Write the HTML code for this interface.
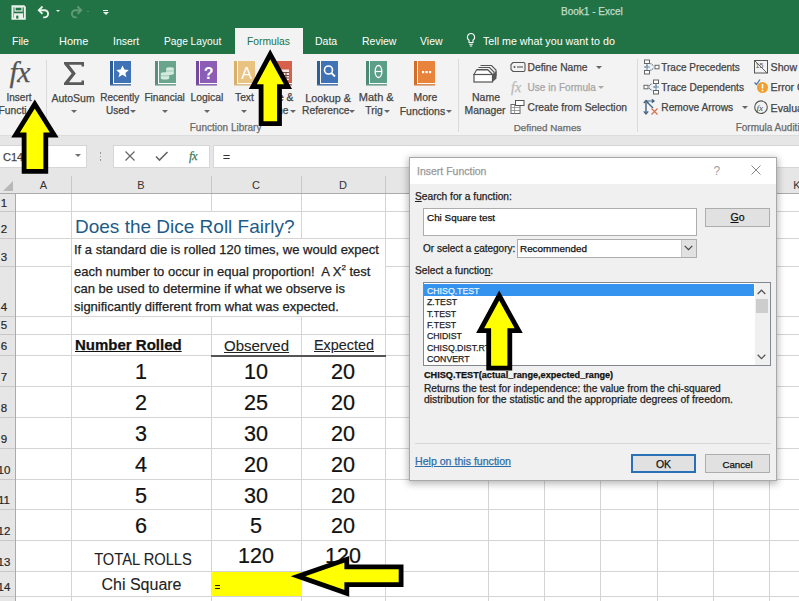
<!DOCTYPE html>
<html><head><meta charset="utf-8">
<style>
*{margin:0;padding:0;box-sizing:border-box}
html,body{width:799px;height:601px;overflow:hidden;background:#fff}
body{position:relative;font-family:"Liberation Sans",sans-serif;color:#262626}
.a{position:absolute;white-space:nowrap}
.t{position:absolute;white-space:nowrap;line-height:1;-webkit-text-stroke:0.25px currentColor}
.hl{position:absolute;height:1px;background:#d4d4d4}
.vl{position:absolute;width:1px;background:#d4d4d4}
.tab{position:absolute;top:36px;font-size:11px;color:#fff;line-height:11px}
.rl{position:absolute;font-size:11px;color:#444;line-height:11px;text-align:center}
.dd{position:absolute;width:0;height:0;border-left:3px solid transparent;border-right:3px solid transparent;border-top:3px solid #666}
.rn{position:absolute;left:-8px;width:24px;font-size:11.5px;color:#262626;-webkit-text-stroke:0.2px #262626;text-align:center;line-height:1;white-space:nowrap}
.ch{position:absolute;top:180px;font-size:11px;color:#333;text-align:center;line-height:11px}
.num{position:absolute;font-size:21.6px;color:#111;text-align:center;line-height:21px;-webkit-text-stroke:0.2px #111}
</style></head><body>

<!-- green title/tab bar -->
<div class="a" style="left:0;top:0;width:799px;height:54px;background:#217346"></div>
<div class="a" style="left:0;top:54px;width:799px;height:82px;background:#f3f3f3"></div>
<div class="a" style="left:0;top:135px;width:799px;height:1px;background:#dcdcdc"></div>
<div class="a" style="left:0;top:136px;width:799px;height:58px;background:#e6e6e6"></div>


<!-- QAT icons -->
<svg class="a" style="left:11px;top:5px" width="15" height="15" viewBox="0 0 15 15">
 <path d="M1.5 1.2h11.3l1 1v11.6h-12.3z" fill="none" stroke="#eaf3ec" stroke-width="2"/>
 <rect x="4" y="2" width="7" height="4" fill="none" stroke="#eaf3ec" stroke-width="1.2"/>
 <rect x="3" y="8.3" width="9" height="5" fill="#eaf3ec"/>
 <rect x="5.2" y="10.6" width="2.2" height="3" fill="#217346"/>
</svg>
<svg class="a" style="left:37px;top:5px" width="15" height="15" viewBox="0 0 15 15">
 <path d="M5.5 1.5L1.8 5.2L5.5 8.9" fill="none" stroke="#eaf3ec" stroke-width="1.9"/>
 <path d="M2.3 5.2h5.2a3.6 3.6 0 0 1 0 7.2h-1.3" fill="none" stroke="#eaf3ec" stroke-width="1.9"/>
</svg>
<div class="a" style="left:55.5px;top:10.3px;width:0;height:0;border-left:2.3px solid transparent;border-right:2.3px solid transparent;border-top:2.7px solid #eaf3ec"></div>
<svg class="a" style="left:68px;top:5px" width="15" height="15" viewBox="0 0 15 15">
 <path d="M9.5 1.5L13.2 5.2L9.5 8.9" fill="none" stroke="#5e9b76" stroke-width="1.9"/>
 <path d="M12.7 5.2h-5.2a3.6 3.6 0 0 0 0 7.2h1.3" fill="none" stroke="#5e9b76" stroke-width="1.9"/>
</svg>
<div class="a" style="left:86.5px;top:10.8px;width:2px;height:1.5px;background:#4f8d68"></div>
<div class="a" style="left:103px;top:9.6px;width:5px;height:1.2px;background:#eaf3ec"></div>
<div class="a" style="left:102.5px;top:12px;width:0;height:0;border-left:3px solid transparent;border-right:3px solid transparent;border-top:3.3px solid #eaf3ec"></div>

<div class="t" style="left:561px;top:7px;font-size:10px;color:#c2ddc9">Book1 - Excel</div>

<!-- tabs -->
<div class="tab" style="left:12px;font-size:10.5px">File</div>
<div class="tab" style="left:59px">Home</div>
<div class="tab" style="left:113px;font-size:10.5px">Insert</div>
<div class="tab" style="left:164px;font-size:10.2px">Page Layout</div>
<div class="a" style="left:235px;top:28px;width:68px;height:27px;background:#f3f3f3"></div>
<div class="tab" style="left:247px;font-size:10.3px;color:#217346">Formulas</div>
<div class="tab" style="left:315px;font-size:10.5px">Data</div>
<div class="tab" style="left:362px;font-size:10.5px">Review</div>
<div class="tab" style="left:420px;font-size:10.5px">View</div>
<svg class="a" style="left:466px;top:32px" width="10" height="16" viewBox="0 0 10 16">
 <path d="M5 1.5a3.6 3.6 0 0 0-2 6.6v2.4h4v-2.4a3.6 3.6 0 0 0-2-6.6z" fill="none" stroke="#fff" stroke-width="1.1"/>
 <path d="M3.2 12.3h3.6M3.8 14h2.4" stroke="#fff" stroke-width="1.1"/>
</svg>
<div class="tab" style="left:483px;font-size:10.7px">Tell me what you want to do</div>
<!-- RIBBON -->
<div class="t" style="left:9.5px;top:58px;font-family:'Liberation Serif',serif;font-style:italic;font-size:29.5px;color:#555;letter-spacing:-0.5px">fx</div>
<div class="t" style="left:6.5px;top:93.33px;font-size:10px;color:#444;">Insert</div>
<div class="t" style="left:-1.5px;top:105.88px;font-size:10.3px;color:#444;">Functi</div>
<div class="a" style="left:46px;top:60px;width:1px;height:72px;background:#dadada"></div>
<svg class="a" style="left:63px;top:61px" width="23" height="25" viewBox="0 0 23 25">
 <path d="M1 1H21V5.5H18.5V3.8H6L12.8 12.5L6 21.2H18.5V19.5H21V24H1V22L8.7 12.5L1 3z" fill="#5a5a5a"/>
</svg>
<div class="t" style="left:51.5px;top:92.91px;font-size:10.5px;color:#444;">AutoSum</div>
<div class="dd" style="left:71.0px;top:109.5px;border-top-color:#666"></div>
<svg class="a" style="left:110px;top:61px" width="22" height="25" viewBox="0 0 22 25">
 <rect x="0" y="0" width="21" height="24.5" fill="#fbfbfb"/>
 <rect x="0" y="0" width="3" height="23.5" fill="#2d5e98"/>
 <rect x="4" y="0" width="17" height="22" fill="#3f73b5"/>
 <rect x="0" y="23.2" width="21" height="1.3" fill="#2d5e98"/>
 <path d="M12.5 4.5l1.9 4.1 4.4 0.4-3.4 2.9 1.1 4.3-4-2.4-4 2.4 1.1-4.3-3.4-2.9 4.4-0.4z" fill="#fff"/>
</svg>
<div class="t" style="left:100.3px;top:93.33px;font-size:10px;color:#444;">Recently</div>
<div class="t" style="left:106px;top:106.13px;font-size:10px;color:#444;">Used</div>
<div class="dd" style="left:129.5px;top:109.5px;border-top-color:#666"></div>
<svg class="a" style="left:155px;top:61px" width="22" height="25" viewBox="0 0 22 25">
 <rect x="0" y="0" width="21" height="24.5" fill="#fbfbfb"/>
 <rect x="0" y="0" width="3" height="23.5" fill="#56907a"/>
 <rect x="4" y="0" width="17" height="22" fill="#6aa48c"/>
 <rect x="0" y="23.2" width="21" height="1.3" fill="#56907a"/>
 <g fill="#d3eadf"><ellipse cx="15" cy="7.6" rx="3.8" ry="1.4"/><rect x="11.2" y="7.6" width="7.6" height="5"/><ellipse cx="15" cy="12.6" rx="3.8" ry="1.4"/><ellipse cx="10" cy="12.6" rx="4.2" ry="1.4"/><rect x="5.8" y="12.6" width="8.4" height="4.6"/><ellipse cx="10" cy="17.2" rx="4.2" ry="1.4"/></g><path d="M11.2 10h7.6M5.8 14.8h8.4" stroke="#8dbba6" stroke-width="0.7"/>
</svg>
<div class="t" style="left:144.4px;top:93.25px;font-size:10.1px;color:#444;">Financial</div>
<div class="dd" style="left:161.7px;top:109.5px;border-top-color:#666"></div>
<svg class="a" style="left:196px;top:61px" width="22" height="25" viewBox="0 0 22 25">
 <rect x="0" y="0" width="21" height="24.5" fill="#fbfbfb"/>
 <rect x="0" y="0" width="3" height="23.5" fill="#74489c"/>
 <rect x="4" y="0" width="17" height="22" fill="#8c5db5"/>
 <rect x="0" y="23.2" width="21" height="1.3" fill="#74489c"/>
 <text x="12.7" y="17.5" text-anchor="middle" font-family="Liberation Sans" font-weight="bold" font-size="16" fill="#fff">?</text>
</svg>
<div class="t" style="left:190.4px;top:93.00px;font-size:10.4px;color:#444;">Logical</div>
<div class="dd" style="left:203.8px;top:109.5px;border-top-color:#666"></div>
<svg class="a" style="left:234px;top:61px" width="22" height="25" viewBox="0 0 22 25">
 <rect x="0" y="0" width="21" height="24.5" fill="#fbfbfb"/>
 <rect x="0" y="0" width="3" height="23.5" fill="#d9b06a"/>
 <rect x="4" y="0" width="17" height="22" fill="#e8c382"/>
 <rect x="0" y="23.2" width="21" height="1.3" fill="#d9b06a"/>
 <text x="12.5" y="17.5" text-anchor="middle" font-family="Liberation Sans" font-size="16" fill="#fff">A</text>
</svg>
<div class="t" style="left:235px;top:93.08px;font-size:10.3px;color:#444;">Text</div>
<div class="dd" style="left:241.0px;top:109.5px;border-top-color:#666"></div>
<svg class="a" style="left:271px;top:61px" width="22" height="25" viewBox="0 0 22 25">
 <rect x="0" y="0" width="21" height="24.5" fill="#fbfbfb"/>
 <rect x="0" y="0" width="3" height="23.5" fill="#b94e3b"/>
 <rect x="4" y="0" width="17" height="22" fill="#d6604a"/>
 <rect x="0" y="23.2" width="21" height="1.3" fill="#b94e3b"/>
 <rect x="9" y="8.5" width="9" height="10.5" fill="#f6e3de"/><path d="M9 11.5h9M9 14.5h9M9 17h9M12 11.5v7.5M15 11.5v7.5" stroke="#6b3b30" stroke-width="0.9"/>
</svg>
<div class="t" style="left:262px;top:93.08px;font-size:10.3px;color:#444;">Date &amp;</div>
<div class="t" style="left:266px;top:105.88px;font-size:10.3px;color:#444;">Time</div>
<div class="dd" style="left:290.0px;top:109.5px;border-top-color:#666"></div>
<svg class="a" style="left:317px;top:61px" width="22" height="25" viewBox="0 0 22 25">
 <rect x="0" y="0" width="21" height="24.5" fill="#fbfbfb"/>
 <rect x="0" y="0" width="3" height="23.5" fill="#2d5e98"/>
 <rect x="4" y="0" width="17" height="22" fill="#3f73b5"/>
 <rect x="0" y="23.2" width="21" height="1.3" fill="#2d5e98"/>
 <circle cx="11.5" cy="9" r="4" fill="none" stroke="#fff" stroke-width="1.6"/><path d="M14.3 11.8L18 15.5" stroke="#fff" stroke-width="1.8"/>
</svg>
<div class="t" style="left:305.3px;top:92.66px;font-size:10.8px;color:#444;">Lookup &amp;</div>
<div class="t" style="left:302px;top:105.88px;font-size:10.3px;color:#444;">Reference</div>
<div class="dd" style="left:349.0px;top:109.5px;border-top-color:#666"></div>
<svg class="a" style="left:366px;top:61px" width="22" height="25" viewBox="0 0 22 25">
 <rect x="0" y="0" width="21" height="24.5" fill="#fbfbfb"/>
 <rect x="0" y="0" width="3" height="23.5" fill="#4c8a76"/>
 <rect x="4" y="0" width="17" height="22" fill="#5c9f89"/>
 <rect x="0" y="23.2" width="21" height="1.3" fill="#4c8a76"/>
 <ellipse cx="12.5" cy="10.5" rx="3.3" ry="6" fill="none" stroke="#fff" stroke-width="1.4"/><path d="M9.3 10.5h6.4" stroke="#fff" stroke-width="1.2"/>
</svg>
<div class="t" style="left:358.8px;top:92.49px;font-size:11px;color:#444;">Math &amp;</div>
<div class="t" style="left:365.3px;top:105.88px;font-size:10.3px;color:#444;">Trig</div>
<div class="dd" style="left:383.5px;top:109.5px;border-top-color:#666"></div>
<svg class="a" style="left:414px;top:61px" width="22" height="25" viewBox="0 0 22 25">
 <rect x="0" y="0" width="21" height="24.5" fill="#fbfbfb"/>
 <rect x="0" y="0" width="3" height="23.5" fill="#cf6f2a"/>
 <rect x="4" y="0" width="17" height="22" fill="#e8833b"/>
 <rect x="0" y="23.2" width="21" height="1.3" fill="#cf6f2a"/>
 <rect x="8" y="10" width="2.2" height="2.2" fill="#fff"/><rect x="11.5" y="10" width="2.2" height="2.2" fill="#fff"/><rect x="15" y="10" width="2.2" height="2.2" fill="#fff"/>
</svg>
<div class="t" style="left:413.6px;top:93.00px;font-size:10.4px;color:#444;">More</div>
<div class="t" style="left:399.7px;top:105.71px;font-size:10.5px;color:#444;">Functions</div>
<div class="dd" style="left:445.5px;top:109.5px;border-top-color:#666"></div>
<div class="t" style="left:189.75px;top:123.44px;font-size:10px;color:#6a6a6a;">Function Library</div>
<div class="a" style="left:458px;top:59px;width:1px;height:73px;background:#dadada"></div>
<svg class="a" style="left:473px;top:64px" width="26" height="20" viewBox="0 0 26 20">
 <path d="M7.5 1.5h11l4.5 4.5v6" fill="none" stroke="#555" stroke-width="1.1"/>
 <path d="M5.5 3.5h11l4.5 4.5v6" fill="none" stroke="#555" stroke-width="1.1"/>
 <path d="M3.5 5.5h11l4.5 4.5" fill="none" stroke="#555" stroke-width="1.1"/>
 <path d="M1 10.5l2.5-4.5h11.5l4.5 4.5z" fill="#fff" stroke="#555" stroke-width="1.1"/>
 <rect x="1" y="10.5" width="18.5" height="7.5" fill="#fff" stroke="#555" stroke-width="1.2"/>
 <path d="M19.5 10.5l4-3.5v7.5l-4 3.5z" fill="#555"/>
</svg>
<div class="t" style="left:472px;top:92.11px;font-size:10.5px;color:#444;">Name</div>
<div class="t" style="left:464.5px;top:105.70px;font-size:10.4px;color:#444;">Manager</div>
<svg class="a" style="left:510px;top:61px" width="16" height="13" viewBox="0 0 16 13">
 <path d="M3 1.5h10.5a1.5 1.5 0 0 1 1.5 1.5v6a1.5 1.5 0 0 1-1.5 1.5h-10.5l-2-2v-5z" fill="none" stroke="#555" stroke-width="1.1"/>
 <circle cx="4.5" cy="6" r="1" fill="#555"/><path d="M7 6h6" stroke="#555" stroke-width="1.1"/>
</svg>
<div class="t" style="left:527.5px;top:62.53px;font-size:10.3px;color:#444;">Define Name</div>
<div class="dd" style="left:595.8px;top:66.0px;border-top-color:#666"></div>
<div class="t" style="left:511px;top:81px;font-family:'Liberation Serif',serif;font-style:italic;font-size:14px;color:#b8b8b8">fx</div>
<div class="t" style="left:527.5px;top:82.70px;font-size:10.1px;color:#a6a6a6;">Use in Formula</div>
<div class="dd" style="left:598.0px;top:86.0px;border-top-color:#aaa"></div>
<svg class="a" style="left:510px;top:100px" width="15" height="14" viewBox="0 0 15 14">
 <rect x="1" y="4.5" width="9" height="9" fill="#fff" stroke="#666" stroke-width="1"/>
 <path d="M1 7.5h9M1 10.5h9M4.5 4.5v9" stroke="#888" stroke-width="0.8"/>
 <rect x="5.5" y="0.5" width="8.5" height="5" fill="#fff" stroke="#555" stroke-width="1"/>
</svg>
<div class="t" style="left:527.5px;top:103.03px;font-size:10.3px;color:#444;">Create from Selection</div>
<div class="t" style="left:513.75px;top:123.45px;font-size:9.8px;color:#6a6a6a;">Defined Names</div>
<div class="a" style="left:637px;top:59px;width:1px;height:73px;background:#dadada"></div>
<svg class="a" style="left:643px;top:59px" width="17" height="16" viewBox="0 0 17 16">
 <rect x="1.5" y="1" width="5" height="3.5" fill="#fff" stroke="#666" stroke-width="1"/>
 <rect x="1.5" y="11.5" width="5" height="3.5" fill="#fff" stroke="#666" stroke-width="1"/>
 <rect x="12" y="6.3" width="4" height="3.5" fill="#fff" stroke="#666" stroke-width="1"/>
 <path d="M4 5.5v5M1.5 8h5" stroke="#3e6a8f" stroke-width="1.6" stroke-dasharray="1.3 0.7"/>
 <path d="M7.5 4.5l3 2.5M7.5 11.5l3-2.5" stroke="#3e6a8f" stroke-width="1.2" stroke-dasharray="1 0.8"/>
</svg>
<div class="t" style="left:661.3px;top:62.63px;font-size:10px;color:#444;">Trace Precedents</div>
<svg class="a" style="left:643px;top:79px" width="17" height="16" viewBox="0 0 17 16">
 <rect x="1" y="6.3" width="4" height="3.5" fill="#fff" stroke="#666" stroke-width="1"/>
 <rect x="10.5" y="1" width="5" height="3.5" fill="#fff" stroke="#666" stroke-width="1"/>
 <rect x="10.5" y="11.5" width="5" height="3.5" fill="#fff" stroke="#666" stroke-width="1"/>
 <path d="M13 5.5v5M10.5 8h5" stroke="#3e6a8f" stroke-width="1.6" stroke-dasharray="1.3 0.7"/>
 <path d="M6 7l3-2.5M6 9l3 2.5" stroke="#3e6a8f" stroke-width="1.2" stroke-dasharray="1 0.8"/>
</svg>
<div class="t" style="left:661.3px;top:82.65px;font-size:10.1px;color:#444;">Trace Dependents</div>
<svg class="a" style="left:643px;top:99px" width="17" height="17" viewBox="0 0 17 17">
 <path d="M3 2v12.5" stroke="#41627e" stroke-width="1.4"/>
 <path d="M0.8 4l2.2-2.6 2.2 2.6M0.8 12.3l2.2 2.6 2.2-2.6" stroke="#41627e" stroke-width="1.3" fill="none"/>
 <path d="M3.5 2h7.5M8.8 0.3l2.3 1.7-2.3 1.7" stroke="#41627e" stroke-width="1.2" fill="none"/>
 <path d="M4 3l6 6" stroke="#41627e" stroke-width="1.2"/>
 <path d="M8.5 9.5l6 6M14.5 9.5l-6 6" stroke="#d9734e" stroke-width="1.3"/>
</svg>
<div class="t" style="left:661.3px;top:102.67px;font-size:10.2px;color:#444;">Remove Arrows</div>
<div class="dd" style="left:741.8px;top:106.0px;border-top-color:#666"></div>
<svg class="a" style="left:754px;top:60px" width="14" height="14" viewBox="0 0 14 14">
 <rect x="0.5" y="0.5" width="13" height="12.5" fill="none" stroke="#555" stroke-width="1"/>
 <path d="M1 1l12 12" stroke="#555" stroke-width="0.9"/>
 <text x="1.5" y="8" font-size="7" font-family="Liberation Sans" fill="#555">15</text>
</svg>
<div class="t" style="left:770.6px;top:62.13px;font-size:10.6px;color:#444;">Show</div>
<svg class="a" style="left:754px;top:79px" width="15" height="15" viewBox="0 0 15 15">
 <path d="M0.5 3.5l2 2 3.5-5" stroke="#3f73b5" stroke-width="1.3" fill="none"/>
 <circle cx="8.5" cy="8.5" r="5.5" fill="#f0a030"/>
 <path d="M8.5 5v4.5M8.5 10.7v1.5" stroke="#fff" stroke-width="1.5"/>
</svg>
<div class="t" style="left:770.6px;top:82.43px;font-size:10.6px;color:#444;">Error Checking</div>
<svg class="a" style="left:754px;top:100px" width="15" height="15" viewBox="0 0 15 15">
 <circle cx="7" cy="7.2" r="6.3" fill="none" stroke="#555" stroke-width="1.1"/>
 <text x="2.6" y="10.5" font-size="9" font-style="italic" font-family="Liberation Serif" fill="#444">fx</text>
</svg>
<div class="t" style="left:770.6px;top:103.03px;font-size:10.6px;color:#444;">Evaluate</div>
<div class="t" style="left:735.7px;top:122.94px;font-size:10px;color:#6a6a6a;">Formula Auditing</div>
<!-- /RIBBON -->
<!-- SHEET -->
<div class="a" style="left:0;top:145px;width:87px;height:23px;background:#fff;border:1px solid #d6d6d6;border-left:none"></div>
<div class="t" style="left:3px;top:152px;font-size:11px;color:#444">C14</div>
<div class="dd" style="left:74.8px;top:154px;border-left-width:3.2px;border-right-width:3.2px;border-top-width:3.8px;border-top-color:#707070"></div>
<div class="a" style="left:99.5px;top:152.3px;width:1.5px;height:1.5px;background:#9a9a9a"></div><div class="a" style="left:99.5px;top:155.8px;width:1.5px;height:1.5px;background:#9a9a9a"></div><div class="a" style="left:99.5px;top:159.3px;width:1.5px;height:1.5px;background:#9a9a9a"></div>
<div class="a" style="left:113px;top:145px;width:97px;height:23px;background:#fff;border:1px solid #d6d6d6"></div>
<svg class="a" style="left:124px;top:150px" width="12" height="12" viewBox="0 0 12 12"><path d="M1.5 1.5l9 9M10.5 1.5l-9 9" stroke="#666" stroke-width="1.2"/></svg>
<svg class="a" style="left:155px;top:150px" width="14" height="12" viewBox="0 0 14 12"><path d="M1 6.5l3.5 3.5 8-8" stroke="#666" stroke-width="1.6" fill="none"/></svg>
<div class="t" style="left:189px;top:150px;font-family:'Liberation Serif',serif;font-style:italic;font-size:12.5px;color:#3a7a5a;letter-spacing:-0.5px">fx</div>
<div class="a" style="left:213px;top:145px;width:600px;height:23px;background:#fff;border:1px solid #d6d6d6;border-right:none"></div>
<div class="t" style="left:223px;top:151px;font-size:12px;color:#333">=</div>
<div class="a" style="left:0;top:194px;width:15px;height:407px;background:#e6e6e6"></div>
<div class="a" style="left:0;top:193px;width:799px;height:1px;background:#ababab"></div>
<div class="a" style="left:15px;top:194px;width:1px;height:407px;background:#ababab"></div>
<svg class="a" style="left:3px;top:181px" width="10" height="10" viewBox="0 0 10 10"><path d="M10 0V10H0z" fill="#b8b8b8"/></svg>
<div class="a" style="left:71px;top:176px;width:1px;height:17px;background:#c8c8c8"></div>
<div class="ch" style="left:16px;width:55px">A</div>
<div class="a" style="left:211px;top:176px;width:1px;height:17px;background:#c8c8c8"></div>
<div class="ch" style="left:71px;width:140px">B</div>
<div class="a" style="left:301px;top:176px;width:1px;height:17px;background:#c8c8c8"></div>
<div class="ch" style="left:211px;width:90px">C</div>
<div class="a" style="left:385px;top:176px;width:1px;height:17px;background:#c8c8c8"></div>
<div class="ch" style="left:301px;width:84px">D</div>
<div class="a" style="left:488px;top:176px;width:1px;height:17px;background:#c8c8c8"></div>
<div class="ch" style="left:385px;width:103px">E</div>
<div class="a" style="left:544px;top:176px;width:1px;height:17px;background:#c8c8c8"></div>
<div class="ch" style="left:488px;width:56px">F</div>
<div class="a" style="left:600px;top:176px;width:1px;height:17px;background:#c8c8c8"></div>
<div class="ch" style="left:544px;width:56px">G</div>
<div class="a" style="left:657px;top:176px;width:1px;height:17px;background:#c8c8c8"></div>
<div class="ch" style="left:600px;width:57px">H</div>
<div class="a" style="left:713px;top:176px;width:1px;height:17px;background:#c8c8c8"></div>
<div class="ch" style="left:657px;width:56px">I</div>
<div class="a" style="left:769px;top:176px;width:1px;height:17px;background:#c8c8c8"></div>
<div class="ch" style="left:713px;width:56px">J</div>
<div class="a" style="left:825px;top:176px;width:1px;height:17px;background:#c8c8c8"></div>
<div class="ch" style="left:769px;width:56px">K</div>
<div class="rn" style="top:197.69px">1</div>
<div class="rn" style="top:223.69px">2</div>
<div class="rn" style="top:251.69px">3</div>
<div class="rn" style="top:301.69px">4</div>
<div class="rn" style="top:319.69px">5</div>
<div class="rn" style="top:340.69px">6</div>
<div class="rn" style="top:371.69px">7</div>
<div class="rn" style="top:402.69px">8</div>
<div class="rn" style="top:433.69px">9</div>
<div class="rn" style="top:464.69px">10</div>
<div class="rn" style="top:494.69px">11</div>
<div class="rn" style="top:525.69px">12</div>
<div class="rn" style="top:556.69px">13</div>
<div class="rn" style="top:581.69px">14</div>
<div class="a" style="left:0;top:211px;width:15px;height:1px;background:#c8c8c8"></div>
<div class="hl" style="left:16px;top:211px;width:783px"></div>
<div class="a" style="left:0;top:238px;width:15px;height:1px;background:#c8c8c8"></div>
<div class="hl" style="left:16px;top:238px;width:783px"></div>
<div class="a" style="left:0;top:266px;width:15px;height:1px;background:#c8c8c8"></div>
<div class="hl" style="left:16px;top:266px;width:55px"></div>
<div class="hl" style="left:385px;top:266px;width:414px"></div>
<div class="a" style="left:0;top:316px;width:15px;height:1px;background:#c8c8c8"></div>
<div class="hl" style="left:16px;top:316px;width:783px"></div>
<div class="a" style="left:0;top:334px;width:15px;height:1px;background:#c8c8c8"></div>
<div class="hl" style="left:16px;top:334px;width:783px"></div>
<div class="a" style="left:0;top:355px;width:15px;height:1px;background:#c8c8c8"></div>
<div class="hl" style="left:16px;top:355px;width:783px"></div>
<div class="a" style="left:0;top:386px;width:15px;height:1px;background:#c8c8c8"></div>
<div class="hl" style="left:16px;top:386px;width:783px"></div>
<div class="a" style="left:0;top:417px;width:15px;height:1px;background:#c8c8c8"></div>
<div class="hl" style="left:16px;top:417px;width:783px"></div>
<div class="a" style="left:0;top:448px;width:15px;height:1px;background:#c8c8c8"></div>
<div class="hl" style="left:16px;top:448px;width:783px"></div>
<div class="a" style="left:0;top:479px;width:15px;height:1px;background:#c8c8c8"></div>
<div class="hl" style="left:16px;top:479px;width:783px"></div>
<div class="a" style="left:0;top:509px;width:15px;height:1px;background:#c8c8c8"></div>
<div class="hl" style="left:16px;top:509px;width:783px"></div>
<div class="a" style="left:0;top:540px;width:15px;height:1px;background:#c8c8c8"></div>
<div class="hl" style="left:16px;top:540px;width:783px"></div>
<div class="a" style="left:0;top:571px;width:15px;height:1px;background:#c8c8c8"></div>
<div class="hl" style="left:16px;top:571px;width:783px"></div>
<div class="a" style="left:0;top:596px;width:15px;height:1px;background:#c8c8c8"></div>
<div class="hl" style="left:16px;top:596px;width:783px"></div>
<div class="vl" style="left:71px;top:194px;height:407px"></div>
<div class="vl" style="left:211px;top:194px;height:17px"></div>
<div class="vl" style="left:211px;top:316px;height:285px"></div>
<div class="vl" style="left:301px;top:194px;height:44px"></div>
<div class="vl" style="left:301px;top:316px;height:285px"></div>
<div class="vl" style="left:385px;top:194px;height:407px"></div>
<div class="vl" style="left:488px;top:194px;height:407px"></div>
<div class="vl" style="left:544px;top:194px;height:407px"></div>
<div class="vl" style="left:600px;top:194px;height:407px"></div>
<div class="vl" style="left:657px;top:194px;height:407px"></div>
<div class="vl" style="left:713px;top:194px;height:407px"></div>
<div class="vl" style="left:769px;top:194px;height:407px"></div>
<div class="vl" style="left:825px;top:194px;height:407px"></div>
<div class="t" style="left:75px;top:217px;font-size:19px;color:#1d5b88;-webkit-text-stroke:0">Does the Dice Roll Fairly?</div>
<div class="t" style="left:74px;top:242.5px;font-size:13px;color:#222">If a standard die is rolled 120 times, we would expect</div>
<div class="t" style="left:74px;top:263.5px;font-size:13px;color:#222">each number to occur in equal proportion!&nbsp; A X<sup style="font-size:8px;vertical-align:6px">2</sup> test</div>
<div class="t" style="left:74px;top:282.0px;font-size:13px;color:#222">can be used to determine if what we observe is</div>
<div class="t" style="left:74px;top:300.0px;font-size:13px;color:#222">significantly different from what was expected.</div>
<div class="t" style="left:75px;top:337px;font-size:15px;font-weight:bold;color:#111;text-decoration:underline">Number Rolled</div>
<div class="t" style="left:224px;top:338px;font-size:15px;color:#222;text-decoration:underline;-webkit-text-stroke:0.1px">Observed</div>
<div class="t" style="left:314px;top:338.3px;font-size:14.4px;color:#222;text-decoration:underline;-webkit-text-stroke:0.1px">Expected</div>
<div class="a" style="left:211px;top:355px;width:175px;height:2px;background:#555"></div>
<div class="num" style="left:71px;top:361.4px;width:140px">1</div>
<div class="num" style="left:211px;top:361.4px;width:90px">10</div>
<div class="num" style="left:301px;top:361.4px;width:84px">20</div>
<div class="num" style="left:71px;top:392.4px;width:140px">2</div>
<div class="num" style="left:211px;top:392.4px;width:90px">25</div>
<div class="num" style="left:301px;top:392.4px;width:84px">20</div>
<div class="num" style="left:71px;top:423.4px;width:140px">3</div>
<div class="num" style="left:211px;top:423.4px;width:90px">30</div>
<div class="num" style="left:301px;top:423.4px;width:84px">20</div>
<div class="num" style="left:71px;top:454.4px;width:140px">4</div>
<div class="num" style="left:211px;top:454.4px;width:90px">20</div>
<div class="num" style="left:301px;top:454.4px;width:84px">20</div>
<div class="num" style="left:71px;top:485.4px;width:140px">5</div>
<div class="num" style="left:211px;top:485.4px;width:90px">30</div>
<div class="num" style="left:301px;top:485.4px;width:84px">20</div>
<div class="num" style="left:71px;top:515.4px;width:140px">6</div>
<div class="num" style="left:211px;top:515.4px;width:90px">5</div>
<div class="num" style="left:301px;top:515.4px;width:84px">20</div>
<div class="t" style="left:72.5px;top:552px;width:140px;text-align:center;font-size:16.6px;color:#222;transform:scaleX(0.885);-webkit-text-stroke:0.1px">TOTAL ROLLS</div>
<div class="num" style="left:211px;top:546px;width:90px;font-size:21.5px">120</div>
<div class="num" style="left:301px;top:546px;width:84px;font-size:21.5px">120</div>
<div class="t" style="left:71.5px;top:577px;width:140px;text-align:center;font-size:16px;color:#222;-webkit-text-stroke:0.1px">Chi Square</div>
<div class="a" style="left:211px;top:572px;width:91px;height:24px;background:#ffff00"></div>
<div class="a" style="left:214.5px;top:585px;width:5px;height:1.3px;background:#222"></div><div class="a" style="left:214.5px;top:587.7px;width:5px;height:1.3px;background:#222"></div>
<!-- /SHEET -->
<!-- DIALOG -->
<div class="a" style="left:409px;top:157px;width:368px;height:324px;box-shadow:0 2px 7px 1px rgba(0,0,0,0.28)"></div>
<div class="a" style="left:409px;top:157px;width:368px;height:324px;background:#f0f0f0;border:1px solid #a8a8a8"></div>
<div class="a" style="left:410px;top:158px;width:366px;height:26px;background:#fff"></div>
<div class="t" style="left:417px;top:166px;font-size:10.5px;color:#999">Insert Function</div>
<div class="t" style="left:713.5px;top:164.5px;font-size:12px;color:#a0a0a0;-webkit-text-stroke:0">?</div>
<svg class="a" style="left:751px;top:165px" width="10" height="10" viewBox="0 0 10 10"><path d="M0.5 0.5l9 9M9.5 0.5l-9 9" stroke="#8a8a8a" stroke-width="1"/></svg>
<div class="t" style="left:415px;top:192px;font-size:10.2px;color:#222"><u>S</u>earch for a function:</div>
<div class="a" style="left:423px;top:208px;width:274px;height:28px;background:#fff;border:1px solid #adadad"></div>
<div class="t" style="left:427px;top:212.5px;font-size:9.9px;color:#111">Chi Square test</div>
<div class="a" style="left:705px;top:208px;width:65px;height:19px;background:#e1e1e1;border:1px solid #adadad"></div>
<div class="t" style="left:705px;top:212px;width:65px;text-align:center;font-size:10.5px;color:#111"><u>G</u>o</div>
<div class="t" style="left:423px;top:244px;font-size:10px;color:#222">Or select a <u>c</u>ategory:</div>
<div class="a" style="left:517px;top:239px;width:180px;height:19px;background:#fff;border:1px solid #adadad"></div>
<div class="a" style="left:681px;top:240px;width:15px;height:17px;background:#e1e1e1;border-left:1px solid #c8c8c8"></div>
<svg class="a" style="left:684px;top:245px" width="9" height="6" viewBox="0 0 9 6"><path d="M0.7 0.8l3.8 3.8 3.8-3.8" stroke="#444" stroke-width="1.2" fill="none"/></svg>
<div class="t" style="left:520px;top:243.5px;font-size:9.9px;color:#111">Recommended</div>
<div class="t" style="left:415px;top:266px;font-size:10.2px;color:#222">Select a functio<u>n</u>:</div>
<div class="a" style="left:423px;top:282px;width:348px;height:84px;background:#fff;border:1px solid #828790"></div>
<div class="a" style="left:424px;top:284px;width:330px;height:12px;background:#3393ee"></div>
<div class="a" style="left:755px;top:283px;width:15px;height:82px;background:#f0f0f0"></div>
<div class="a" style="left:756px;top:299px;width:12px;height:14px;background:#cdcdcd"></div>
<svg class="a" style="left:757px;top:289px" width="9" height="6" viewBox="0 0 9 6"><path d="M0.7 5l3.8-3.8 3.8 3.8" stroke="#555" stroke-width="1.3" fill="none"/></svg>
<svg class="a" style="left:757px;top:354px" width="9" height="6" viewBox="0 0 9 6"><path d="M0.7 0.8l3.8 3.8 3.8-3.8" stroke="#555" stroke-width="1.3" fill="none"/></svg>
<div class="t" style="left:427px;top:285.9px;font-size:9.5px;color:#e8f2fe;transform:scaleX(0.92);transform-origin:0 0">CHISQ.TEST</div>
<div class="t" style="left:427px;top:297.3px;font-size:9.5px;color:#222;transform:scaleX(0.92);transform-origin:0 0">Z.TEST</div>
<div class="t" style="left:427px;top:308.6px;font-size:9.5px;color:#222;transform:scaleX(0.92);transform-origin:0 0">T.TEST</div>
<div class="t" style="left:427px;top:320.0px;font-size:9.5px;color:#222;transform:scaleX(0.92);transform-origin:0 0">F.TEST</div>
<div class="t" style="left:427px;top:331.4px;font-size:9.5px;color:#222;transform:scaleX(0.92);transform-origin:0 0">CHIDIST</div>
<div class="t" style="left:427px;top:342.8px;font-size:9.5px;color:#222;transform:scaleX(0.92);transform-origin:0 0">CHISQ.DIST.RT</div>
<div class="t" style="left:427px;top:354.1px;font-size:9.5px;color:#222;transform:scaleX(0.92);transform-origin:0 0">CONVERT</div>
<div class="t" style="left:424px;top:370.5px;font-size:9.15px;font-weight:bold;color:#111">CHISQ.TEST(actual_range,expected_range)</div>
<div class="t" style="left:424px;top:384px;font-size:10.2px;color:#222">Returns the test for independence: the value from the chi-squared</div>
<div class="t" style="left:424px;top:395px;font-size:10.4px;color:#222">distribution for the statistic and the appropriate degrees of freedom.</div>
<div class="a" style="left:415px;top:443px;width:356px;height:1px;background:#d7d7d7"></div>
<div class="t" style="left:415px;top:456px;font-size:10.6px;color:#2e6ea8;text-decoration:underline">Help on this function</div>
<div class="a" style="left:631px;top:454px;width:65px;height:19px;background:#e1e1e1;border:2px solid #2a70b5"></div>
<div class="t" style="left:631px;top:459px;width:65px;text-align:center;font-size:10.5px;color:#111">OK</div>
<div class="a" style="left:705px;top:454px;width:65px;height:19px;background:#e1e1e1;border:1px solid #adadad"></div>
<div class="t" style="left:705px;top:459.5px;width:65px;text-align:center;font-size:9.7px;color:#111">Cancel</div>
<!-- /DIALOG -->
<!-- ARROWS -->
<svg class="a" style="left:8px;top:96px" width="54" height="81" viewBox="0 0 54 81"><path d="M26.80 8.10 L46.26 39.00 L37.80 39.00 L37.80 75.40 L16.10 75.40 L16.10 39.00 L7.54 39.00Z" fill="#ffff00" stroke="#000" stroke-width="4.8" stroke-linejoin="miter" stroke-miterlimit="10"/></svg>
<svg class="a" style="left:246px;top:46px" width="49" height="84" viewBox="0 0 49 84"><path d="M24.20 8.36 L41.96 40.60 L33.50 40.60 L33.50 77.70 L15.10 77.70 L15.10 40.60 L6.84 40.60Z" fill="#ffff00" stroke="#000" stroke-width="4.8" stroke-linejoin="miter" stroke-miterlimit="10"/></svg>
<svg class="a" style="left:473px;top:287px" width="53" height="87" viewBox="0 0 53 87"><path d="M26.20 8.53 L45.66 43.60 L36.80 43.60 L36.80 81.10 L15.70 81.10 L15.70 43.60 L7.14 43.60Z" fill="#ffff00" stroke="#000" stroke-width="4.8" stroke-linejoin="miter" stroke-miterlimit="10"/></svg>
<svg class="a" style="left:287px;top:552px" width="120" height="49" viewBox="0 0 120 49"><path d="M11.03 24.20 L59.80 7.34 L59.80 14.90 L114.10 14.90 L114.10 32.60 L59.80 32.60 L59.80 41.36Z" fill="#ffff00" stroke="#000" stroke-width="4.8" stroke-linejoin="miter" stroke-miterlimit="10"/></svg>
<!-- /ARROWS -->
</body></html>
